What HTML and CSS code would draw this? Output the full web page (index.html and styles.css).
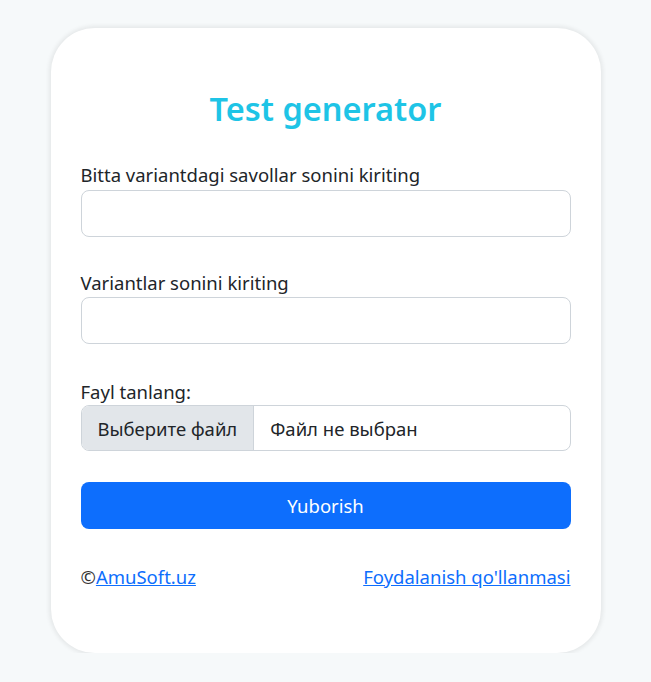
FILE: index.html
```html
<!DOCTYPE html>
<html lang="uz">
<head>
<meta charset="utf-8">
<title>Test generator</title>
<link rel="stylesheet" href="styles.css">
</head>
<body>
<main class="card">
  <h2 class="title">Test generator</h2>
  <form class="form">
    <div class="group">
      <label class="label label-first" for="q">Bitta variantdagi savollar sonini kiriting</label>
      <input class="control" id="q" type="text">
    </div>
    <div class="group group-2">
      <label class="label" for="v">Variantlar sonini kiriting</label>
      <input class="control" id="v" type="text">
    </div>
    <div class="group group-3">
      <label class="label label-file">Fayl tanlang:</label>
      <div class="file">
        <span class="file-btn">Выберите файл</span>
        <span class="file-name">Файл не выбран</span>
      </div>
    </div>
    <button class="submit" type="button">Yuborish</button>
  </form>
  <footer class="footer">
    <span>©<a href="#">AmuSoft.uz</a></span>
    <a href="#">Foydalanish qo'llanmasi</a>
  </footer>
</main>
</body>
</html>
```
FILE: styles.css
```css
html, body {
  margin: 0;
  padding: 0;
}
body {
  background: #f6f9fa;
  font-family: "Noto Sans", "Open Sans", sans-serif;
  color: #212529;
  padding-top: 28px;
}
.card {
  box-sizing: border-box;
  width: 550px;
  margin: 0 auto;
  background: #fff;
  border-radius: 44px;
  box-shadow: 0 0 4px 2px rgba(0,0,0,0.07);
  padding: 62px 30px 64px;
}
.title {
  margin: 0 0 35px;
  text-align: center;
  color: #1ec4e6;
  font-size: 32.5px;
  font-weight: 600;
  line-height: 38px;
}
.form {
  display: flex;
  flex-direction: column;
}
.group {
  display: flex;
  flex-direction: column;
  margin-bottom: 34px;
}
.group-2 {
  margin-bottom: 36px;
}
.group-3 {
  margin-bottom: 31px;
}
.label {
  font-size: 18.5px;
  line-height: 24px;
  margin-bottom: 2px;
}
.label-first {
  margin-bottom: 3px;
}
.label-file {
  margin-bottom: 1px;
}
.control {
  box-sizing: border-box;
  height: 47px;
  border: 1px solid #ced4da;
  border-radius: 8px;
  font: inherit;
  font-size: 18.5px;
  padding: 0 16px;
  outline: none;
}
.file {
  box-sizing: border-box;
  display: flex;
  height: 46px;
  border: 1px solid #ced4da;
  border-radius: 8px;
  overflow: hidden;
  font-size: 18.5px;
}
.file-btn {
  display: flex;
  align-items: center;
  padding: 0 16px;
  background: #e2e6ea;
  border-right: 1px solid #ced4da;
}
.file-name {
  display: flex;
  align-items: center;
  padding: 0 16px;
}
.submit {
  height: 47px;
  border: none;
  border-radius: 8px;
  background: #0d6efd;
  color: #fff;
  font: inherit;
  font-size: 18.5px;
}
.footer {
  display: flex;
  justify-content: space-between;
  margin-top: 36px;
  font-size: 18.5px;
  line-height: 24px;
  color: #333;
}
.footer a {
  color: #0d6efd;
  text-decoration: underline;
}
```
